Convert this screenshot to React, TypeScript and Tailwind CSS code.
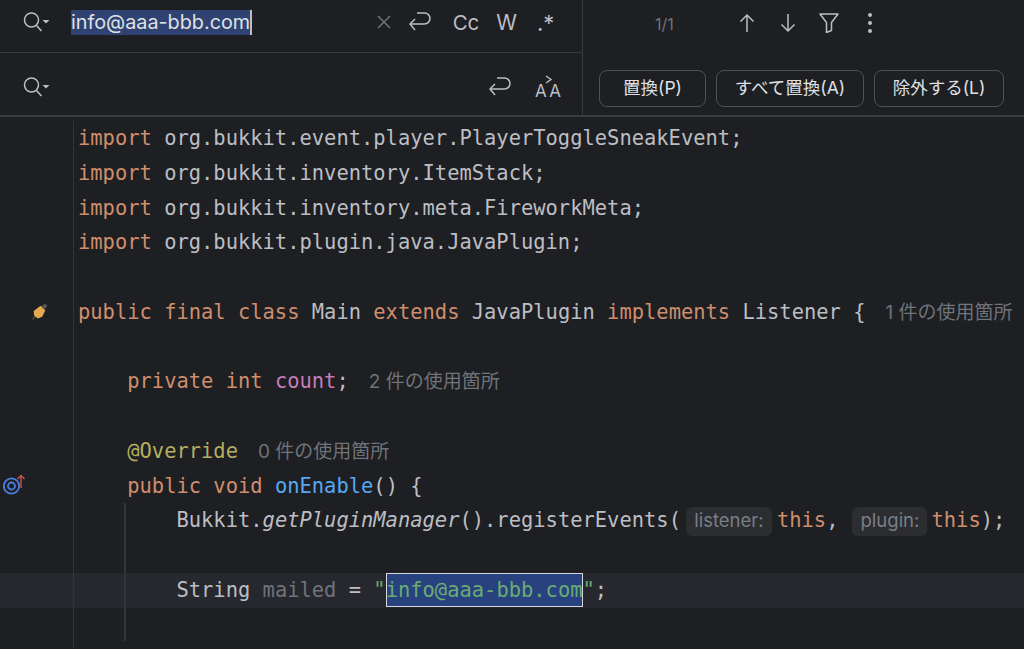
const mono = { fontFamily: '"DejaVu Sans Mono", monospace' };

function SearchIcon() {
  return (
    <svg width="28" height="22" viewBox="0 0 28 22" fill="none" stroke="#bcbec4" strokeWidth="1.5">
      <circle cx="8.500" cy="9" r="7" />
      <path d="M13.500 14.500l5 5.500" />
      <path d="M19.500 9h7l-3.500 3.500z" fill="#bcbec4" stroke="none" />
    </svg>
  );
}

function WrapIcon() {
  return (
    <svg width="24" height="22" viewBox="0 0 24 22" fill="none" stroke="#bcbec4" strokeWidth="1.5">
      <path d="M9 2h7.500a5.500 5.500 0 0 1 0 11H2" />
      <path d="M7 8l-5 5 5 6" />
    </svg>
  );
}

function PreserveCase() {
  return (
    <span className="relative flex h-[24px] w-[26px] items-end justify-between text-[17px] leading-[16px] text-[#bcbec4]">
      <span>A</span>
      <span>A</span>
      <svg className="absolute left-[10px] top-0" width="8" height="9" viewBox="0 0 8 9" fill="none" stroke="#bcbec4" strokeWidth="1.400">
        <path d="M1 1l5 3.500-5 3.500" />
      </svg>
    </span>
  );
}

function ArrowIcon({ down = false }: { down?: boolean }) {
  return (
    <svg width="16" height="20" viewBox="0 0 16 20" fill="none" stroke="#bcbec4" strokeWidth="1.5">
      {down ? <path d="M8 1v17M1.500 11.500L8 18l6.500-6.500" /> : <path d="M8 19V2M1.500 8.500L8 2l6.500 6.500" />}
    </svg>
  );
}

function FilterIcon() {
  return (
    <svg width="20" height="20" viewBox="0 0 20 20" fill="none" stroke="#bcbec4" strokeWidth="1.5" strokeLinejoin="round">
      <path d="M1 1h18l-6.500 8.500v8l-5 2v-10z" />
    </svg>
  );
}

function MoreIcon() {
  return (
    <span className="flex flex-col gap-[4px]">
      <span className="h-[4px] w-[4px] rounded-full bg-[#bcbec4]" />
      <span className="h-[4px] w-[4px] rounded-full bg-[#bcbec4]" />
      <span className="h-[4px] w-[4px] rounded-full bg-[#bcbec4]" />
    </span>
  );
}

function BeanIcon() {
  return (
    <svg width="17" height="17" viewBox="0 0 16 16">
      <path d="M10 3l3-2.500 2.500 2-3 3.500z" fill="#55565a" />
      <path d="M0.500 15l3-3 1.500 1.500-3 2.500z" fill="#3f4044" />
      <path d="M2.500 7.500L9 2.500l4.500 4.500-3 6-4 1.500-3.500-2.500z" fill="#e5a94f" />
    </svg>
  );
}

function OverrideIcon() {
  return (
    <svg width="24" height="22" viewBox="0 0 24 22" fill="none">
      <circle cx="8.500" cy="13" r="7.700" stroke="#4a7fe0" strokeWidth="1.800" />
      <circle cx="8.500" cy="13" r="3.500" stroke="#4a7fe0" strokeWidth="1.800" />
      <path d="M18 15V2.500M14.500 6L18 2.500l3.500 3.500" stroke="#c75450" strokeWidth="1.400" />
    </svg>
  );
}

function Hint({ children }: { children: React.ReactNode }) {
  return (
    <span className="ml-[20px] font-['Inter','Noto_Sans_CJK_JP',sans-serif] text-[19px] text-[#6f737a]">{children}</span>
  );
}

function ParamHint({ children, className }: { children: React.ReactNode; className: string }) {
  return (
    <span className={`inline-flex h-[29px] items-center justify-center rounded-[6px] bg-[#2b2d30] align-middle font-['Inter',sans-serif] text-[18.500px] text-[#7a7e85] ${className}`}>
      {children}
    </span>
  );
}

function K({ children }: { children: React.ReactNode }) {
  return <span className="text-[#cf8e6d]">{children}</span>;
}

function Row({ children, icon, active = false }: { children?: React.ReactNode; icon?: React.ReactNode; active?: boolean }) {
  return (
    <div className={`flex h-[34.750px] ${active ? 'bg-[#26282e]' : ''}`}>
      <div className="flex w-[74px] shrink-0 items-center border-r border-[#313438]">{icon}</div>
      <div className="whitespace-pre pl-[4px] text-[20.450px] leading-[35.750px] text-[#bcbec4]" style={mono}>
        {children}
      </div>
    </div>
  );
}

function FindButton({ label, className }: { label: string; className: string }) {
  return (
    <button className={`flex h-[37px] items-center justify-center rounded-[8px] border-[1.500px] border-[#4e5157] text-[17.500px] text-[#dfe1e5] ${className}`}>
      {label}
    </button>
  );
}

export default function App() {
  return (
    <div className="relative h-[649px] w-[1024px] overflow-hidden bg-[#1e1f22] font-['Inter','Noto_Sans_CJK_JP',sans-serif]">
      {/* find / replace header */}
      <div className="flex h-[117px] border-b-2 border-[#393b40]">
        <div className="flex w-[583px] shrink-0 flex-col border-r-[1.500px] border-[#393b40]">
          <div className="flex h-[53px] shrink-0 items-center border-b-[1.500px] border-[#393b40] pb-[8px] pl-[23px]">
            <SearchIcon />
            <span className="ml-[20px] flex h-[25px] items-center bg-[#2f4272] pt-[2px] text-[19.800px] text-[#dfe1e5]">info@aaa-bbb.com</span>
            <span className="h-[25px] w-[1.500px] bg-[#bcbec4]" />
            <svg className="ml-[125px]" width="14" height="14" viewBox="0 0 14 14" stroke="#6f737a" strokeWidth="1.500">
              <path d="M1 1l12 12M13 1L1 13" />
            </svg>
            <span className="ml-[17px]"><WrapIcon /></span>
            <span className="ml-[21px] pt-[2px] text-[20.500px] text-[#bcbec4]">Cc</span>
            <span className="ml-[17px] pt-[2px] text-[21px] text-[#bcbec4]">W</span>
            <span className="ml-[20px] pt-[2px] text-[22px] text-[#bcbec4]">.*</span>
          </div>
          <div className="flex flex-1 items-center pl-[23px] pt-[6px]">
            <SearchIcon />
            <span className="ml-auto"><WrapIcon /></span>
            <span className="ml-[23px] mr-[21px]"><PreserveCase /></span>
          </div>
        </div>
        <div className="flex flex-1 flex-col">
          <div className="flex h-[53px] shrink-0 items-center pb-[8px] pl-[72px]">
            <span className="w-[20px] pt-[2px] text-[16px] text-[#6f737a]">1/1</span>
            <span className="ml-[64px]"><ArrowIcon /></span>
            <span className="ml-[25px]"><ArrowIcon down /></span>
            <span className="ml-[23px]"><FilterIcon /></span>
            <span className="ml-[29px]"><MoreIcon /></span>
          </div>
          <div className="flex flex-1 items-start gap-[10px] pl-[16px] pt-[17px]">
            <FindButton label="置換(P)" className="w-[107px]" />
            <FindButton label="すべて置換(A)" className="w-[148px]" />
            <FindButton label="除外する(L)" className="w-[130px]" />
          </div>
        </div>
      </div>

      {/* editor */}
      <div className="pt-[4px]">
        <Row><K>import</K> org.bukkit.event.player.PlayerToggleSneakEvent;</Row>
        <Row><K>import</K> org.bukkit.inventory.ItemStack;</Row>
        <Row><K>import</K> org.bukkit.inventory.meta.FireworkMeta;</Row>
        <Row><K>import</K> org.bukkit.plugin.java.JavaPlugin;</Row>
        <Row />
        <Row icon={<span className="ml-[31px] -translate-y-[1px]"><BeanIcon /></span>}>
          <K>public final class</K> Main <K>extends</K> JavaPlugin <K>implements</K> Listener {'{'}
          <Hint>1 件の使用箇所</Hint>
        </Row>
        <Row />
        <Row>
          {'    '}<K>private int</K> <span className="text-[#c77dbb]">count</span>;
          <Hint>2 件の使用箇所</Hint>
        </Row>
        <Row />
        <Row>
          {'    '}<span className="text-[#b3ae60]">@Override</span>
          <Hint>0 件の使用箇所</Hint>
        </Row>
        <Row icon={<span className="ml-[3px] -translate-y-[2px]"><OverrideIcon /></span>}>
          {'    '}<K>public void</K> <span className="text-[#56a8f5]">onEnable</span>() {'{'}
        </Row>
        <Row>
          {'        '}Bukkit.<span className="italic">getPluginManager</span>().registerEvents(
          <ParamHint className="ml-[5px] mr-[5px] w-[86px]">listener:</ParamHint>
          <K>this</K>,
          <ParamHint className="ml-[14px] mr-[4px] w-[75px]">plugin:</ParamHint>
          <K>this</K>);
        </Row>
        <Row />
        <Row active>
          {'        '}String <span className="text-[#6f737a]">mailed</span> = <span className="text-[#6aab73]">"</span>
          <span className="inline-block h-[34px] bg-[#27427f] text-[#6aab73] outline-[1.500px] -outline-offset-[1.500px] outline-[#d5d7dc] [outline-style:solid]">info@aaa-bbb.com</span>
          <span className="text-[#6aab73]">"</span>;
        </Row>
        <Row />
        <Row />
      </div>

      {/* indent guide */}
      <div className="absolute left-[124px] top-[503px] h-[138px] w-[1.500px] bg-[#313438]" />
    </div>
  );
}
